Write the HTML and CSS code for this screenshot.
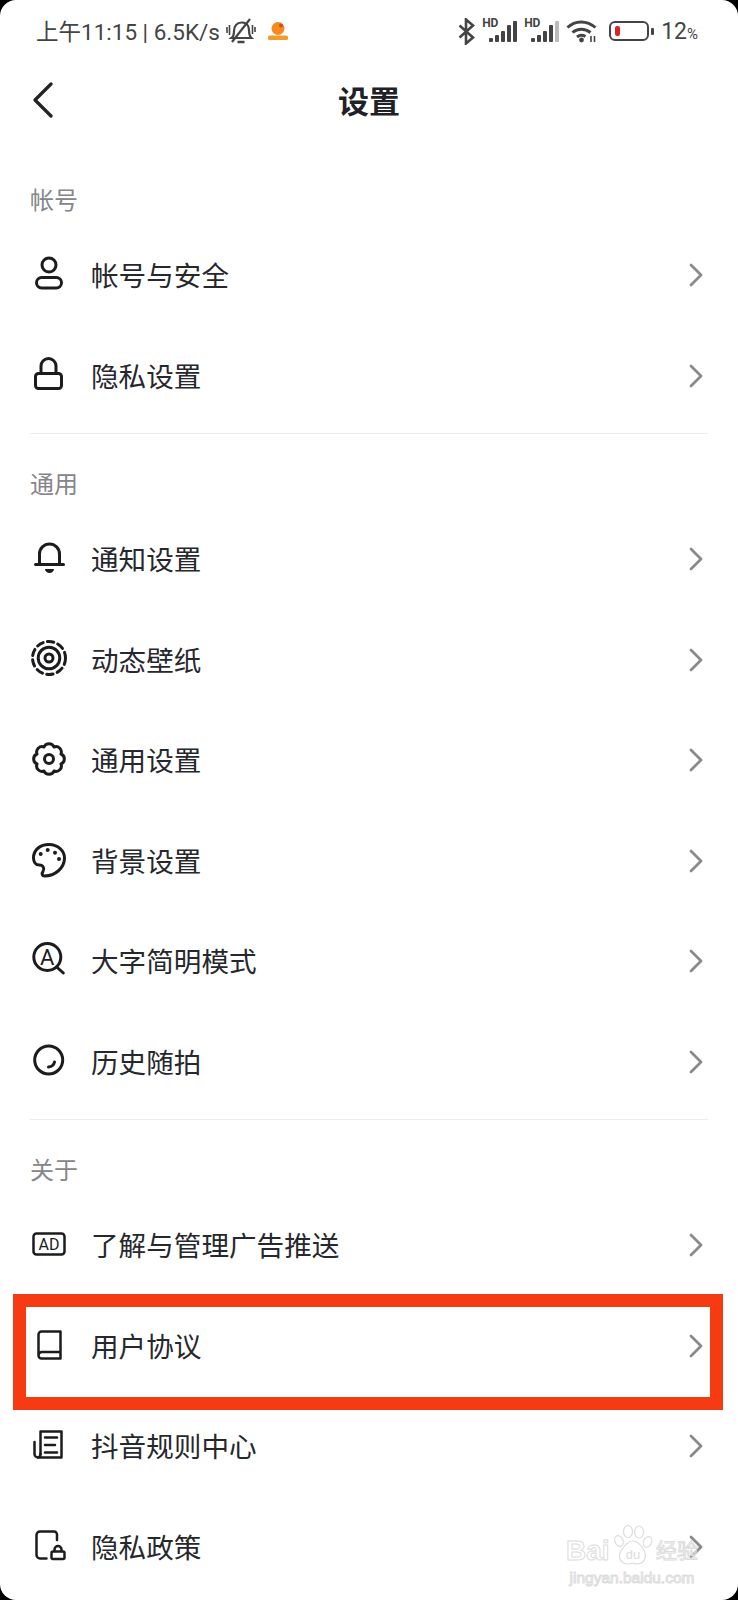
FILE: index.html
```html
<!DOCTYPE html>
<html lang="zh-CN">
<head>
    <meta charset="UTF-8">
    <meta name="viewport" content="width=device-width, initial-scale=1.0">
    <title>设置</title>
    <link rel="stylesheet" href="styles.css">
</head>
<body>
    <div class="screen">
        <!-- Status bar -->
        <div class="status-bar">
            <div class="status-left">
                <span class="status-text">上午11:15 | 6.5K/s</span>
                <svg class="status-bell" width="30" height="26" viewBox="0 0 30 26" fill="none" stroke="#444" stroke-width="2.2">
                    <path d="M5.5 20c2-1.500 2.500-3.500 2.500-7 0-5 3-8.500 7.500-8.500 3.500 0 6 1.500 7 4.500.6 2 .5 6 1 7.500.3 1.500 1 2.500 2 3.500z"/>
                    <path d="M6 24L24 1"/>
                    <path d="M1 9v6M3.500 7v10M26.500 7v9M29 9v5" stroke-width="1.6"/>
                    <path d="M11.500 24h7" stroke-width="2.4"/>
                </svg>
                <svg class="status-app" width="20" height="18" viewBox="0 0 20 18">
                    <circle cx="10" cy="6.500" r="6.500" fill="#f58a1f"/>
                    <circle cx="13" cy="3.500" r="2" fill="#e2412a"/>
                    <rect x="0" y="13.500" width="20" height="4.500" rx="1.500" fill="#f59a2e"/>
                </svg>
            </div>
            <div class="status-right">
                <svg width="17" height="27" viewBox="0 0 17 27" fill="none" stroke="#444" stroke-width="2.6">
                    <path d="M1.500 7.500L15 19.500 8 25.500V1.500L15 7.500 1.500 19.500"/>
                </svg>
                <div class="signal">
                    <span class="signal-hd">HD</span>
                    <div class="bars">
                        <i class="bar bar-1"></i><i class="bar bar-2"></i><i class="bar bar-3"></i><i class="bar bar-4"></i><i class="bar bar-5"></i>
                    </div>
                </div>
                <div class="signal">
                    <span class="signal-hd">HD</span>
                    <div class="bars">
                        <i class="bar bar-1"></i><i class="bar bar-2"></i><i class="bar bar-3"></i><i class="bar bar-4"></i><i class="bar bar-5 bar-off"></i>
                    </div>
                </div>
                <svg width="32" height="24" viewBox="0 0 32 24" fill="none" stroke="#444" stroke-width="3">
                    <path d="M1.500 8.500C9 1 21 1 29.500 8.500"/>
                    <path d="M6.500 13.500C11.500 9 19 9 24.500 13.500"/>
                    <path d="M11 18c2.500-2 6-2 8.500-.5"/>
                    <circle cx="15.500" cy="21" r="2.400" fill="#444" stroke="none"/>
                    <path d="M25 23v-6M28.500 17v6" stroke-width="1.6"/>
                </svg>
                <div class="battery">
                    <div class="battery-body"><i class="battery-level"></i></div>
                    <i class="battery-nub"></i>
                </div>
                <span class="status-battery-text">12<small>%</small></span>
            </div>
        </div>

        <!-- Title bar -->
        <div class="nav">
            <svg class="nav-back" width="20" height="36" viewBox="0 0 20 36" fill="none" stroke="#222" stroke-width="3.2" stroke-linecap="round" stroke-linejoin="round">
                <path d="M18 2L2 18l16 16"/>
            </svg>
            <div class="nav-title">设置</div>
        </div>

        <div class="section-label">帐号</div>
        <div class="row">
            <svg class="row-icon" viewBox="0 0 40 40">
                <circle cx="21" cy="10" r="7"/>
                <rect x="8.500" y="22.500" width="25" height="10.500" rx="5.250"/>
            </svg>
            <span class="row-text">帐号与安全</span>
            <svg class="row-arrow" viewBox="0 0 14 24"><path d="M2 2l10 10L2 22"/></svg>
        </div>
        <div class="row">
            <svg class="row-icon" viewBox="0 0 40 40">
                <rect x="7.500" y="17.500" width="26" height="15" rx="3"/>
                <path d="M13 17v-7a7.500 7.500 0 0 1 15 0v7"/>
            </svg>
            <span class="row-text">隐私设置</span>
            <svg class="row-arrow" viewBox="0 0 14 24"><path d="M2 2l10 10L2 22"/></svg>
        </div>

        <div class="divider"></div>

        <div class="section-label">通用</div>
        <div class="row">
            <svg class="row-icon" viewBox="0 0 40 40">
                <path d="M7.500 25.500h28"/>
                <path d="M11.500 25V15a10 10 0 0 1 20 0v10"/>
                <path class="icon-solid" d="M17 30h9a4.500 4 0 0 1-9 0z"/>
            </svg>
            <span class="row-text">通知设置</span>
            <svg class="row-arrow" viewBox="0 0 14 24"><path d="M2 2l10 10L2 22"/></svg>
        </div>
        <div class="row">
            <svg class="row-icon" viewBox="0 0 40 40">
                <circle cx="21" cy="18" r="16.500" stroke-dasharray="6.500 4.300"/>
                <circle cx="21" cy="18" r="10.800"/>
                <circle cx="21" cy="18" r="4"/>
            </svg>
            <span class="row-text">动态壁纸</span>
            <svg class="row-arrow" viewBox="0 0 14 24"><path d="M2 2l10 10L2 22"/></svg>
        </div>
        <div class="row">
            <svg class="row-icon" viewBox="0 0 40 40">
                <path d="M33 14A5.400 5.400 0 0 1 33 24A5.400 5.400 0 0 1 26 31A5.400 5.400 0 0 1 16 31A5.400 5.400 0 0 1 9 24A5.400 5.400 0 0 1 9 14A5.400 5.400 0 0 1 16 7A5.400 5.400 0 0 1 26 7A5.400 5.400 0 0 1 33 14z"/>
                <circle cx="21" cy="19" r="4.500"/>
            </svg>
            <span class="row-text">通用设置</span>
            <svg class="row-arrow" viewBox="0 0 14 24"><path d="M2 2l10 10L2 22"/></svg>
        </div>
        <div class="row">
            <svg class="row-icon" viewBox="0 0 40 40">
                <path d="M5.500 17C5.500 9 12 3.500 21 3.500C30 3.500 36.500 10 36.500 17C36.500 27 27 35 16.500 35C14 35 13.500 32.500 15 30.500C17 27.500 15 24 11.500 24C7.500 24 5.500 21 5.500 17z"/>
                <circle class="icon-solid" cx="12.700" cy="13" r="2"/>
                <circle class="icon-solid" cx="19.700" cy="9" r="2"/>
                <circle class="icon-solid" cx="27" cy="11.700" r="2"/>
                <circle class="icon-solid" cx="31" cy="18" r="2"/>
            </svg>
            <span class="row-text">背景设置</span>
            <svg class="row-arrow" viewBox="0 0 14 24"><path d="M2 2l10 10L2 22"/></svg>
        </div>
        <div class="row">
            <svg class="row-icon" viewBox="0 0 40 40">
                <circle cx="19.300" cy="16" r="13.500"/>
                <path d="M28.700 26l6.600 6"/>
                <text class="icon-text" x="19.300" y="24" font-size="22" text-anchor="middle">A</text>
            </svg>
            <span class="row-text">大字简明模式</span>
            <svg class="row-arrow" viewBox="0 0 14 24"><path d="M2 2l10 10L2 22"/></svg>
        </div>
        <div class="row">
            <svg class="row-icon" viewBox="0 0 40 40">
                <circle cx="20.700" cy="18" r="14"/>
                <path d="M20.500 25c3-.3 5.500-2.500 6-5"/>
            </svg>
            <span class="row-text">历史随拍</span>
            <svg class="row-arrow" viewBox="0 0 14 24"><path d="M2 2l10 10L2 22"/></svg>
        </div>

        <div class="divider"></div>

        <div class="section-label">关于</div>
        <div class="row">
            <svg class="row-icon icon-thin" viewBox="0 0 40 40">
                <rect x="5.500" y="8.500" width="31" height="21" rx="3"/>
                <text class="icon-text" x="21" y="24.500" font-size="16" text-anchor="middle">AD</text>
            </svg>
            <span class="row-text">了解与管理广告推送</span>
            <svg class="row-arrow" viewBox="0 0 14 24"><path d="M2 2l10 10L2 22"/></svg>
        </div>
        <div class="row">
            <div class="row-mark"></div>
            <svg class="row-icon icon-thin" viewBox="0 0 40 40">
                <path d="M10.500 29.500V8.500a3 3 0 0 1 3-3h19v27h-19a3 3 0 0 1-3-3a3.500 3.500 0 0 1 3-3.500h19"/>
            </svg>
            <span class="row-text">用户协议</span>
            <svg class="row-arrow" viewBox="0 0 14 24"><path d="M2 2l10 10L2 22"/></svg>
        </div>
        <div class="row">
            <svg class="row-icon icon-thin" viewBox="0 0 40 40">
                <path d="M12.500 28V5.500h21v26H10A3.500 3.500 0 0 1 6.500 28V16"/>
                <path d="M12.500 28A3.500 3.500 0 0 1 10 31.500"/>
                <path d="M17 11.500h12M17 19h10M17 26.500h12"/>
            </svg>
            <span class="row-text">抖音规则中心</span>
            <svg class="row-arrow" viewBox="0 0 14 24"><path d="M2 2l10 10L2 22"/></svg>
        </div>
        <div class="row">
            <svg class="row-icon icon-thin" viewBox="0 0 40 40">
                <path d="M18.500 31.500H12A3.500 3.500 0 0 1 8.500 28V8A3.500 3.500 0 0 1 12 4.500H26a3 3 0 0 1 3 3V13"/>
                <rect x="23.500" y="24.500" width="13" height="7.500" rx="1.500"/>
                <path d="M26.500 24v-1.500a3.500 3.500 0 0 1 7 0V24"/>
            </svg>
            <span class="row-text">隐私政策</span>
            <svg class="row-arrow" viewBox="0 0 14 24"><path d="M2 2l10 10L2 22"/></svg>
        </div>

        <!-- Watermark -->
        <div class="watermark">
            <div class="watermark-top">
                <span class="watermark-bai">Bai</span>
                <svg class="watermark-paw" width="40" height="42" viewBox="0 0 40 42" fill="none" stroke="#dcdcdc" stroke-width="1.2">
                    <ellipse cx="6" cy="17" rx="4" ry="5.500" transform="rotate(-25 6 17)"/>
                    <ellipse cx="15" cy="7.500" rx="4.500" ry="6"/>
                    <ellipse cx="26" cy="8" rx="4.500" ry="6"/>
                    <ellipse cx="34.500" cy="18" rx="4" ry="5.500" transform="rotate(25 34.500 18)"/>
                    <path d="M20 17c5 0 8 4 11 9 3 6 1 14-7 14-2 0-3-1-4-1s-2 1-5 1C8 40 4 33 8 27c3-5 7-10 12-10z"/>
                    <text x="20" y="35" font-size="13" text-anchor="middle" fill="#dcdcdc" stroke="none">du</text>
                </svg>
                <span class="watermark-cn">经验</span>
            </div>
            <div class="watermark-url">jingyan.baidu.com</div>
        </div>
    </div>
</body>
</html>
```

FILE: styles.css
```css
body {
    margin: 0;
    background-color: #000;
    font-family: "Noto Sans CJK SC", sans-serif;
}

.screen {
    position: relative;
    height: 1600px;
    overflow: hidden;
    background-color: #fff;
    border-radius: 16px;
    color: #222;
}

/* Status bar */
.status-bar {
    height: 62px;
    padding: 0 40px 0 36px;
    display: flex;
    align-items: center;
    justify-content: space-between;
    color: #444;
}

.status-left {
    display: flex;
    align-items: center;
}

.status-text {
    padding-bottom: 2px;
    font-family: Roboto, "Noto Sans CJK SC", sans-serif;
    font-size: 22.5px;
}

.status-bell {
    margin-left: 6px;
}

.status-app {
    margin-left: 12px;
}

.status-right {
    display: flex;
    align-items: center;
    gap: 7px;
}

.signal {
    position: relative;
    width: 35px;
    height: 22px;
}

.signal-hd {
    position: absolute;
    left: 0;
    top: -3px;
    font-family: Roboto, sans-serif;
    font-size: 12px;
    font-weight: 700;
    line-height: 13px;
}

.bars {
    height: 22px;
    display: flex;
    align-items: flex-end;
    justify-content: flex-end;
    gap: 2px;
}

.bar {
    width: 4px;
    background-color: #444;
    border-radius: 1px;
}

.bar-1 { height: 4px; }
.bar-2 { height: 7px; }
.bar-3 { height: 11px; }
.bar-4 { height: 17px; }
.bar-5 { height: 21px; }
.bar-off { background-color: #bbb; }

.battery {
    display: flex;
    align-items: center;
    gap: 2px;
    margin-left: 4px;
}

.battery-body {
    box-sizing: border-box;
    width: 40px;
    height: 20px;
    padding: 3px 4px;
    border: 2.5px solid #444;
    border-radius: 6px;
}

.battery-level {
    display: block;
    width: 5px;
    height: 100%;
    background-color: #d8232a;
    border-radius: 2px;
}

.battery-nub {
    width: 3px;
    height: 7px;
    background-color: #444;
    border-radius: 1px;
}

.status-battery-text {
    font-family: Roboto, sans-serif;
    font-size: 23px;
}

.status-battery-text small {
    font-size: 15px;
}

/* Title bar */
.nav {
    position: relative;
    height: 72px;
    margin: 2px 0 41px;
    display: flex;
    align-items: center;
    justify-content: center;
}

.nav-back {
    position: absolute;
    left: 33px;
    top: 18px;
}

.nav-title {
    padding-bottom: 2px;
    font-size: 31px;
    font-weight: 700;
    color: #1f2126;
}

/* List */
.section-label {
    height: 48px;
    padding-left: 30px;
    font-size: 24px;
    line-height: 44px;
    color: #85868a;
}

.row {
    position: relative;
    height: 100.5px;
    padding: 0 35px 0 28px;
    display: flex;
    align-items: center;
    box-sizing: border-box;
}

.row-icon {
    width: 40px;
    height: 40px;
    flex-shrink: 0;
    fill: none;
    stroke: #1c1c1e;
    stroke-width: 3;
    stroke-linecap: round;
    stroke-linejoin: round;
}

.icon-thin {
    stroke-width: 2.5;
}

.icon-solid {
    fill: #1c1c1e;
    stroke: none;
}

.icon-text {
    fill: #1c1c1e;
    stroke: none;
    font-family: Roboto, sans-serif;
}

.row-text {
    flex: 1;
    margin-left: 23px;
    padding-bottom: 2px;
    font-size: 27.6px;
    color: #26282d;
}

.row-arrow {
    width: 14px;
    height: 24px;
    fill: none;
    stroke: #8a8a8a;
    stroke-width: 2.8;
    stroke-linecap: round;
    stroke-linejoin: round;
}

.divider {
    height: 1px;
    margin: 7px 30px 27px;
    background-color: #ececec;
}

/* Red annotation around the row */
.row-mark {
    position: absolute;
    left: 13px;
    top: -2px;
    width: 710px;
    height: 116px;
    box-sizing: border-box;
    border: 13px solid #f63a11;
}

/* Watermark */
.watermark {
    position: absolute;
    left: 566px;
    top: 1520px;
    width: 132px;
    color: transparent;
    -webkit-text-stroke: 1px #dcdcdc;
    font-family: "Liberation Sans", "Noto Sans CJK SC", sans-serif;
}

.watermark-top {
    height: 46px;
    display: flex;
    align-items: flex-end;
    justify-content: space-between;
}

.watermark-bai {
    font-size: 28px;
    font-weight: 700;
    line-height: 30px;
}

.watermark-paw {
    flex-shrink: 0;
}

.watermark-cn {
    font-size: 21px;
    line-height: 30px;
}

.watermark-url {
    margin-top: 3px;
    font-size: 15.5px;
    line-height: 17px;
    text-align: center;
}
```
